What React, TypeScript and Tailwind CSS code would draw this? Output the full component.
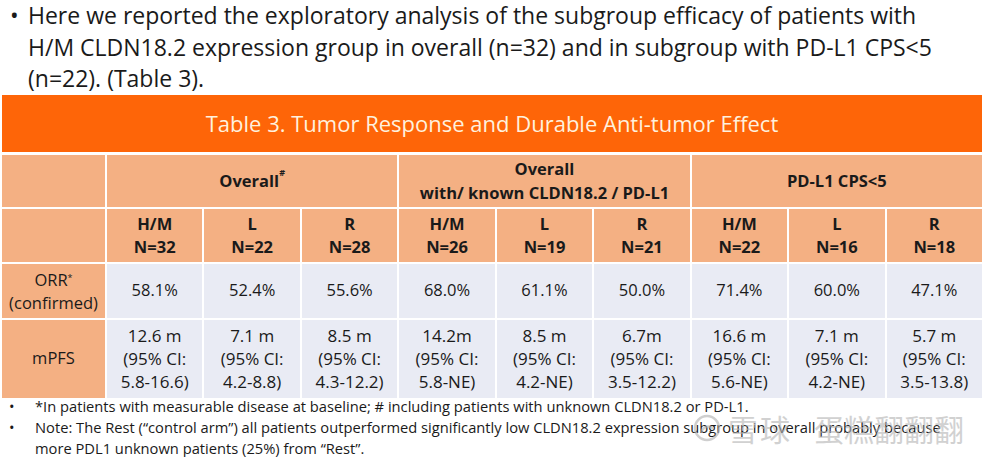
const groups = [
  { label: <>Overall<sup className="text-[9px] align-super">#</sup></>, key: "o" },
  { label: <>Overall<br />with/ known CLDN18.2 / PD-L1</>, key: "k" },
  { label: <>PD-L1 CPS&lt;5</>, key: "p" },
]

const arms = [
  ["H/M", "N=32"], ["L", "N=22"], ["R", "N=28"],
  ["H/M", "N=26"], ["L", "N=19"], ["R", "N=21"],
  ["H/M", "N=22"], ["L", "N=16"], ["R", "N=18"],
]

const orr = ["58.1%", "52.4%", "55.6%", "68.0%", "61.1%", "50.0%", "71.4%", "60.0%", "47.1%"]

const pfs = [
  ["12.6 m", "5.8-16.6)"], ["7.1 m", "4.2-8.8)"], ["8.5 m", "4.3-12.2)"],
  ["14.2m", "5.8-NE)"], ["8.5 m", "4.2-NE)"], ["6.7m", "3.5-12.2)"],
  ["16.6 m", "5.6-NE)"], ["7.1 m", "4.2-NE)"], ["5.7 m", "3.5-13.8)"],
]

export default function App() {
  return (
    <div
      className="relative w-[986px] h-[457px] overflow-hidden bg-white text-[#1a1a1a]"
      style={{ fontFamily: "'Open Sans', 'Liberation Sans', sans-serif" }}
    >
      {/* intro bullet */}
      <div className="flex pl-[10px] text-[23px] leading-[31.5px] whitespace-nowrap">
        <span className="w-[18px] shrink-0">•</span>
        <p>
          Here we reported the exploratory analysis of the subgroup efficacy of patients with
          <br />
          H/M CLDN18.2 expression group in overall (n=32) and in subgroup with PD-L1 CPS&lt;5
          <br />
          (n=22). (Table 3).
        </p>
      </div>

      {/* table */}
      <div className="ml-[2px] w-[980px]">
        <div className="h-[57px] bg-[#fe6508] flex items-center justify-center text-[#fff1de] text-[22px]">
          Table 3. Tumor Response and Durable Anti-tumor Effect
        </div>
        <div className="mt-[3px] grid grid-cols-[103px_repeat(9,1fr)] gap-[2px] text-center">
          {/* group header row */}
          <div className="h-[52px] bg-[#f4b083]" />
          {groups.map((g) => (
            <div
              key={g.key}
              className="col-span-3 h-[52px] bg-[#f4b083] flex items-center justify-center font-bold text-[16.5px] leading-[24px]"
            >
              <div>{g.label}</div>
            </div>
          ))}

          {/* arm header row */}
          <div className="h-[53px] bg-[#f4b083]" />
          {arms.map(([a, n], i) => (
            <div
              key={i}
              className="h-[53px] bg-[#f4b083] flex flex-col items-center justify-center font-bold text-[16.5px] leading-[23px]"
            >
              <span>{a}</span>
              <span>{n}</span>
            </div>
          ))}

          {/* ORR */}
          <div className="h-[54px] bg-[#f4b083] flex flex-col items-center justify-center text-[16.5px] leading-[23px]">
            <span>
              ORR<sup className="text-[9px]">*</sup>
            </span>
            <span>(confirmed)</span>
          </div>
          {orr.map((v, i) => (
            <div key={i} className="h-[54px] bg-[#e9ebf4] flex items-center justify-center text-[16.5px]">
              {v}
            </div>
          ))}

          {/* mPFS */}
          <div className="h-[78px] bg-[#f4b083] flex items-center justify-center text-[16.5px]">
            mPFS
          </div>
          {pfs.map(([m, ci], i) => (
            <div
              key={i}
              className="h-[78px] bg-[#e9ebf4] flex flex-col items-center justify-center text-[17px] leading-[23px]"
            >
              <span>{m}</span>
              <span>(95% CI:</span>
              <span>{ci}</span>
            </div>
          ))}
        </div>
      </div>

      {/* footnotes */}
      <div className="mt-[-2px] text-[14.7px] leading-[21px]">
        <div className="flex">
          <span className="w-[35px] shrink-0 pl-[9px]">•</span>
          <span>*In patients with measurable disease at baseline; # including patients with unknown CLDN18.2 or PD-L1.</span>
        </div>
        <div className="flex">
          <span className="w-[35px] shrink-0 pl-[9px]">•</span>
          <span>
            Note: The Rest (“control arm”) all patients outperformed significantly low CLDN18.2 expression subgroup in overall probably because
            <br />
            more PDL1 unknown patients (25%) from “Rest”.
          </span>
        </div>
      </div>

      {/* watermark */}
      <div className="absolute left-[692px] top-[411px] flex items-center gap-[6px] text-[#b4b4b4] opacity-60 pointer-events-none">
        <svg width="30" height="30" viewBox="0 0 30 30" fill="none" stroke="#b0b0b0" strokeWidth="2.5">
          <circle cx="15" cy="15" r="12" />
          <path d="M9 19c3-6 9-7 12-3" />
        </svg>
        <span className="text-[30px] leading-[34px] tracking-[2px]" style={{ fontFamily: "'Noto Sans CJK SC', sans-serif" }}>
          雪球
        </span>
        <span className="ml-[16px] text-[30px] leading-[34px]" style={{ fontFamily: "'Noto Sans CJK SC', sans-serif" }}>
          蛋糕翻翻翻
        </span>
      </div>
    </div>
  )
}
